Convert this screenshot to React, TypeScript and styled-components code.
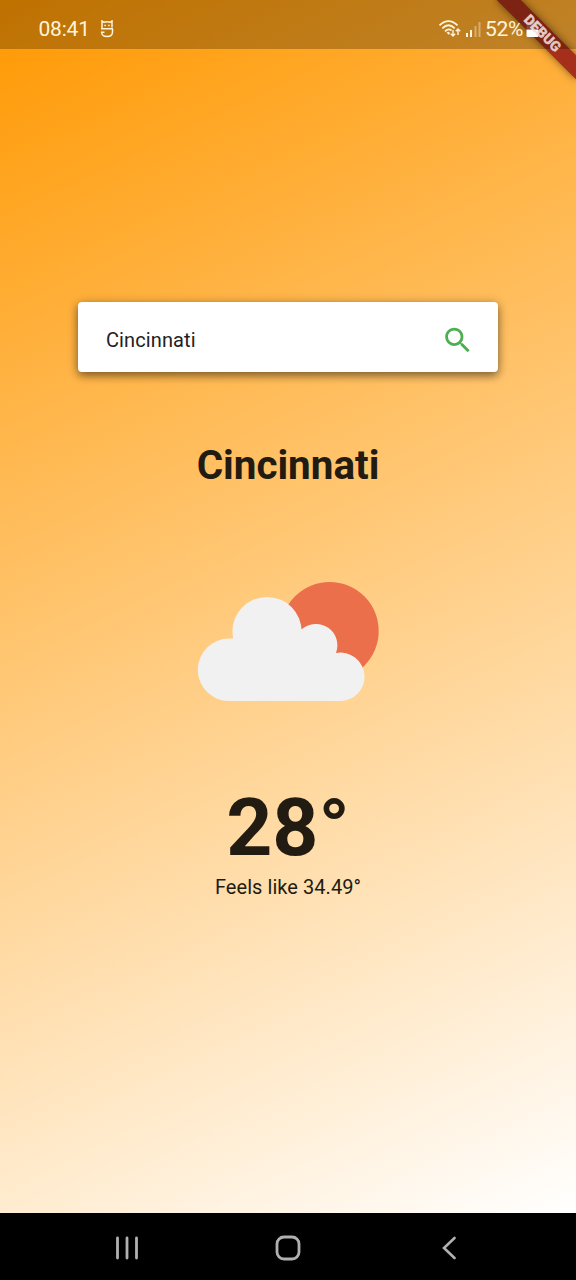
import React from "react";
import styled, { createGlobalStyle } from "styled-components";

const GlobalStyle = createGlobalStyle`
  * { box-sizing: border-box; }
  body { margin: 0; font-family: Roboto, "Liberation Sans", sans-serif; }
`;

const Phone = styled.div`
  position: relative;
  width: 576px;
  height: 1280px;
  display: flex;
  flex-direction: column;
  overflow: hidden;
`;

const Screen = styled.main`
  position: relative;
  flex: 1;
  display: flex;
  flex-direction: column;
  align-items: center;
  background: linear-gradient(154.6deg, #ff9800, #ffffff);
  color: #221b11;
  overflow: hidden;
`;

const StatusBar = styled.header`
  position: relative;
  z-index: 2;
  width: 100%;
  height: 48.5px;
  flex: none;
  display: flex;
  align-items: center;
  justify-content: space-between;
  padding: 9px 37px 0 38.5px;
  background: rgba(0, 0, 0, 0.25);
  color: #fff4dc;
  font-size: 21px;
`;

const StatusGroup = styled.div`
  display: flex;
  align-items: center;
`;

const Clock = styled.span`
  margin-right: 10px;
  letter-spacing: -0.2px;
`;

const Percent = styled.span`
  margin: 0 3px 0 3px;
  letter-spacing: -0.3px;
`;

const DebugBanner = styled.div`
  position: absolute;
  z-index: 1;
  top: 39.2px;
  left: 520px;
  width: 112px;
  height: 16.8px;
  transform-origin: 56px -39.2px;
  transform: rotate(45deg);
  background: #a62f1b;
  box-shadow: 0 0 8px rgba(0, 0, 0, 0.5);
`;

const DebugLabel = styled(DebugBanner)`
  z-index: 3;
  background: none;
  box-shadow: none;
  color: rgba(240, 222, 216, 0.88);
  -webkit-text-stroke: 0.3px rgba(240, 222, 216, 0.88);
  font-size: 14.28px;
  line-height: 16.8px;
  font-weight: 900;
  text-align: center;
`;

const SearchCard = styled.form`
  display: flex;
  align-items: center;
  justify-content: space-between;
  flex: none;
  width: 420px;
  height: 70px;
  margin-top: 253.5px;
  padding: 6px 23px 0 28px;
  border-radius: 4px;
  background: #fff;
  box-shadow: 0 4px 9px rgba(0, 0, 0, 0.4), 0 1px 12px rgba(0, 0, 0, 0.2);
`;

const Query = styled.span`
  font-size: 20px;
  line-height: 24px;
  letter-spacing: 0.1px;
  color: #222;
`;

const City = styled.h1`
  margin: 70px 0 0;
  font-size: 40.4px;
  line-height: 48px;
  font-weight: 700;
`;

const WeatherArt = styled.svg`
  flex: none;
  display: block;
  margin-top: 91px;
`;

const Temperature = styled.div`
  margin-top: 78px;
  font-size: 80.5px;
  line-height: 94px;
  font-weight: 700;
`;

const FeelsLike = styled.div`
  font-size: 20px;
  line-height: 24px;
  letter-spacing: 0.06px;
`;

const NavBar = styled.nav`
  flex: none;
  height: 67px;
  padding-top: 2px;
  display: grid;
  grid-template-columns: repeat(3, 161px);
  justify-content: center;
  align-items: center;
  justify-items: center;
  background: #000;
`;

const Glyph = styled.svg`
  display: block;
  flex: none;
`;

const DroidIcon = () => (
  <Glyph width="14" height="18" viewBox="0 0 14 18" fill="none" stroke="#fff4dc" strokeWidth="1.5">
    <path d="M2 8.500V1l1.800 1.200Q7 1.300 10.200 2.200L12 1V7.500M1 8.800h12M12.500 8.800V12c0 2.800-2.200 4.500-5.500 4.500S1.600 15 1.600 12.200H4.500" />
    <path d="M4.300 5.500h1.600M8.100 5.500h1.600" />
  </Glyph>
);

const WifiIcon = () => (
  <Glyph width="27" height="20" viewBox="0 0 27 20" fill="none" stroke="#fff4dc" strokeWidth="1.8">
    <path d="M1.500 6.300Q10.500-2 19.500 6.300M4.300 9.300Q10.500 3.300 16.700 9.300M7 12.300Q10.500 9 13.500 11.500" />
    <path d="M8.500 13.500l2.200 2.300 1.500-1.600-1.500-1.400Z" fill="#fff4dc" stroke="none" />
    <path d="M15 11v6M12.800 14.800 15 17l2.200-2.200M20 16v-6M17.800 12.200 20 10l2.200 2.200" strokeWidth="1.400" />
  </Glyph>
);

const SignalIcon = () => (
  <Glyph width="17" height="16" viewBox="0 0 17 16" fill="#fff4dc">
    <rect x="1" y="12" width="2" height="4" />
    <rect x="5" y="9" width="2" height="7" />
    <rect x="9.500" y="5" width="2" height="11" opacity=".4" />
    <rect x="13.500" y="1" width="2" height="15" opacity=".4" />
  </Glyph>
);

const BatteryIcon = () => (
  <Glyph width="13" height="18" viewBox="0 0 13 18" fill="#fff">
    <path d="M4 0h5v2h2.500L12.500 3v6H.5V3l1-1H4Z" opacity=".15" />
    <path d="M.5 9.500h12v6q0 1.500-1.500 1.500H2Q.5 17 .5 15.500Z" />
  </Glyph>
);

const SearchIcon = () => (
  <Glyph width="33.6" height="33.6" viewBox="0 -.4 24 24" fill="#4caf50">
    <path d="M15.500 14h-.79l-.28-.27C15.410 12.590 16 11.110 16 9.500 16 5.910 13.090 3 9.500 3S3 5.910 3 9.500 5.910 16 9.500 16c1.610 0 3.090-.59 4.230-1.570l.27.28v.79l5 4.990L20.490 19l-4.990-5zm-6 0C7.010 14 5 11.990 5 9.500S7.010 5 9.500 5 14 7.010 14 9.500 11.990 14 9.500 14z" />
  </Glyph>
);

const PartlyCloudy = () => (
  <WeatherArt width="184" height="122" viewBox="196 581 184 122">
    <circle cx="329.700" cy="631" r="49" fill="#eb6f4a" />
    <path
      fill="#f1f1f1"
      d="M229 701A31.200 31.200 0 0 1 229 638.600H233L302 629A21.500 21.500 0 0 1 336 653A24.200 24.200 0 1 1 340 701Z"
    />
    <circle cx="267" cy="631.500" r="34.600" fill="#f1f1f1" />
  </WeatherArt>
);

export default function App() {
  return (
    <Phone>
      <GlobalStyle />
      <Screen>
        <StatusBar>
          <StatusGroup>
            <Clock>08:41</Clock>
            <DroidIcon />
          </StatusGroup>
          <StatusGroup>
            <WifiIcon />
            <SignalIcon />
            <Percent>52%</Percent>
            <BatteryIcon />
          </StatusGroup>
        </StatusBar>
        <DebugBanner />
        <DebugLabel>DEBUG</DebugLabel>
        <SearchCard>
          <Query>Cincinnati</Query>
          <SearchIcon />
        </SearchCard>
        <City>Cincinnati</City>
        <PartlyCloudy />
        <Temperature>28°</Temperature>
        <FeelsLike>Feels like 34.49°</FeelsLike>
      </Screen>
      <NavBar>
        <Glyph width="24" height="24" viewBox="0 0 24 24" stroke="#b0b0b0" strokeWidth="2.8" strokeLinecap="round">
          <path d="M2.500 2v20M12 2v20M21.500 2v20" />
        </Glyph>
        <Glyph width="26" height="26" viewBox="0 0 26 26" fill="none" stroke="#b0b0b0" strokeWidth="2.8">
          <rect x="2" y="2" width="22" height="22" rx="7" />
        </Glyph>
        <Glyph width="14" height="24" viewBox="0 0 14 24" fill="none" stroke="#b0b0b0" strokeWidth="2.600" strokeLinecap="round">
          <path d="M12.500 2 2 12l10.500 10" />
        </Glyph>
      </NavBar>
    </Phone>
  );
}
